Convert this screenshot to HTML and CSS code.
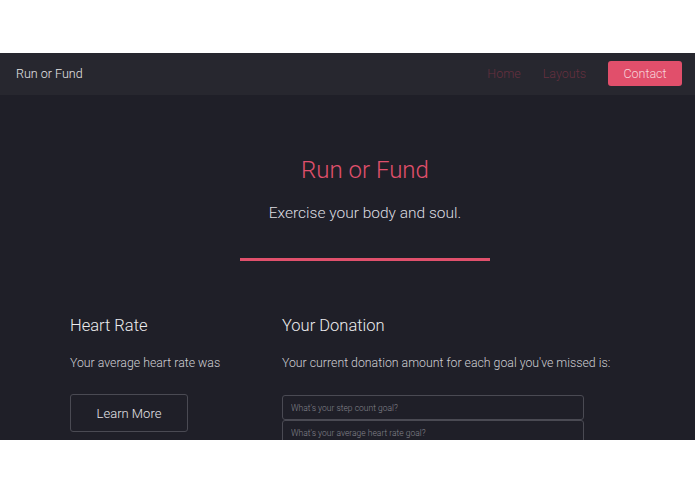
FILE: index.html
```html
<!DOCTYPE html>
<html lang="en">
<head>
    <meta charset="UTF-8">
    <meta name="viewport" content="width=device-width, initial-scale=1.0">
    <title>Run or Fund</title>
    <link rel="stylesheet" href="styles.css">
</head>
<body>
    <div class="top-space"></div>
    <nav class="navbar">
        <a class="brand" href="#">Run or Fund</a>
        <div class="nav-links">
            <a class="nav-link" href="#">Home</a>
            <a class="nav-link" href="#">Layouts</a>
            <a class="nav-button" href="#">Contact</a>
        </div>
    </nav>
    <main class="page">
        <section class="hero">
            <h1 class="hero-title">Run or Fund</h1>
            <p class="hero-sub">Exercise your body and soul.</p>
            <div class="hero-rule"></div>
        </section>
        <section class="columns">
            <div class="col-left">
                <h2 class="col-title">Heart Rate</h2>
                <p class="col-text">Your average heart rate was</p>
                <button class="outline-btn">Learn More</button>
            </div>
            <div class="col-right">
                <h2 class="col-title">Your Donation</h2>
                <p class="col-text">Your current donation amount for each goal you've missed is:</p>
                <div class="goal-form">
                    <input type="text" class="goal-input" placeholder="What's your step count goal?">
                    <input type="text" class="goal-input" placeholder="What's your average heart rate goal?">
                </div>
            </div>
        </section>
    </main>
</body>
</html>
```

FILE: styles.css
```css
body {
    margin: 0;
    background-color: #fff;
    font-family: Roboto, "Liberation Sans", sans-serif;
    font-weight: 300;
}

.top-space {
    height: 53px;
}

.navbar {
    height: 42px;
    background-color: #27272f;
    display: flex;
    align-items: center;
    justify-content: space-between;
    padding: 0 13px 0 16px;
}

.brand {
    color: #e4e4e6;
    font-size: 12.5px;
    text-decoration: none;
    margin-top: -2px;
}

.nav-links {
    display: flex;
    align-items: center;
}

.nav-link {
    color: #66303f;
    font-size: 12.5px;
    text-decoration: none;
    margin-right: 22px;
    margin-top: -2px;
}

.nav-button {
    background-color: #e14f6b;
    color: #f7d3da;
    font-size: 12.5px;
    text-decoration: none;
    height: 25px;
    width: 74px;
    display: flex;
    align-items: center;
    justify-content: center;
    border-radius: 3px;
    margin-top: -2px;
}

.page {
    height: 345px;
    overflow: hidden;
    background-color: #1f1f28;
    padding: 0 35px 0 70px;
}

.hero {
    display: flex;
    flex-direction: column;
    align-items: center;
    padding-top: 58px;
}

.hero-title {
    margin: 0;
    color: #e0506c;
    font-size: 24px;
    font-weight: 300;
    line-height: 34px;
}

.hero-sub {
    margin: 16px 0 0;
    color: #dcdce0;
    font-size: 15.5px;
    line-height: 20px;
}

.hero-rule {
    width: 250px;
    height: 3px;
    background-color: #e0506c;
    margin-top: 35px;
}

.columns {
    display: flex;
    margin-top: 54px;
}

.col-left {
    width: 212px;
}

.col-right {
    flex: 1;
}

.col-title {
    margin: 0;
    color: #ececee;
    font-size: 16.5px;
    font-weight: 300;
    line-height: 22px;
}

.col-text {
    margin: 18px 0 0;
    color: #cfcfd4;
    font-size: 12.3px;
    line-height: 16px;
}

.outline-btn {
    margin-top: 23px;
    width: 118px;
    height: 38px;
    background: transparent;
    border: 1px solid #4a4a53;
    border-radius: 3px;
    color: #e4e4e8;
    font-family: inherit;
    font-weight: 300;
    font-size: 13px;
}

.goal-form {
    margin-top: 24px;
    width: 302px;
    display: flex;
    flex-direction: column;
}

.goal-input {
    height: 25px;
    box-sizing: border-box;
    background: transparent;
    border: 1px solid #4a4a53;
    border-radius: 3px;
    padding: 0 8px;
    color: #ddd;
    font-family: inherit;
    font-size: 8.5px;
    font-weight: 300;
}

.goal-input::placeholder {
    color: #85858d;
}
```
